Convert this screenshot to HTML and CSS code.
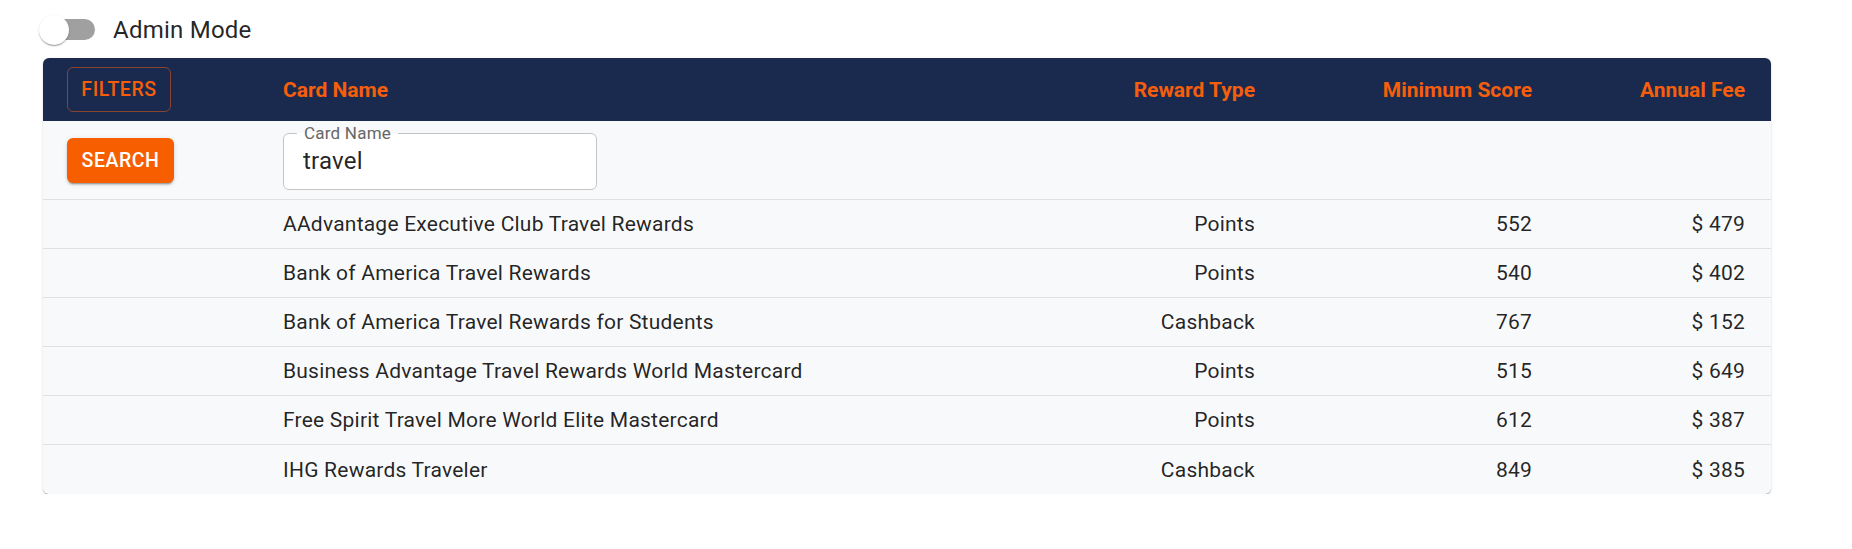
FILE: index.html
```html
<!DOCTYPE html>
<html>
<head>
<meta charset="utf-8">
<link rel="stylesheet" href="styles.css">
</head>
<body>
<div class="page">
  <div class="toggle-row">
    <span class="switch"><span class="track"></span><span class="thumb"></span></span>
    <span class="toggle-label">Admin Mode</span>
  </div>
  <div class="card">
    <div class="row head">
      <div class="cell"><button class="btn-outlined">Filters</button></div>
      <div class="cell">Card Name</div>
      <div class="cell right">Reward Type</div>
      <div class="cell right">Minimum Score</div>
      <div class="cell right">Annual Fee</div>
    </div>
    <div class="row filter">
      <div class="cell"><button class="btn-contained">Search</button></div>
      <div class="cell">
        <div class="field">
          <span class="field-label">Card Name</span>
          <span class="field-value">travel</span>
        </div>
      </div>
      <div class="cell"></div>
      <div class="cell"></div>
      <div class="cell"></div>
    </div>
    <div class="row body">
      <div class="cell"></div>
      <div class="cell">AAdvantage Executive Club Travel Rewards</div>
      <div class="cell right">Points</div>
      <div class="cell right">552</div>
      <div class="cell right">$ 479</div>
    </div>
    <div class="row body">
      <div class="cell"></div>
      <div class="cell">Bank of America Travel Rewards</div>
      <div class="cell right">Points</div>
      <div class="cell right">540</div>
      <div class="cell right">$ 402</div>
    </div>
    <div class="row body">
      <div class="cell"></div>
      <div class="cell">Bank of America Travel Rewards for Students</div>
      <div class="cell right">Cashback</div>
      <div class="cell right">767</div>
      <div class="cell right">$ 152</div>
    </div>
    <div class="row body">
      <div class="cell"></div>
      <div class="cell">Business Advantage Travel Rewards World Mastercard</div>
      <div class="cell right">Points</div>
      <div class="cell right">515</div>
      <div class="cell right">$ 649</div>
    </div>
    <div class="row body">
      <div class="cell"></div>
      <div class="cell">Free Spirit Travel More World Elite Mastercard</div>
      <div class="cell right">Points</div>
      <div class="cell right">612</div>
      <div class="cell right">$ 387</div>
    </div>
    <div class="row body last">
      <div class="cell"></div>
      <div class="cell">IHG Rewards Traveler</div>
      <div class="cell right">Cashback</div>
      <div class="cell right">849</div>
      <div class="cell right">$ 385</div>
    </div>
  </div>
</div>
</body>
</html>
```
FILE: styles.css
```css
* { box-sizing: border-box; }
html, body { margin: 0; padding: 0; background: #fff; }
body { font-family: Roboto, "Noto Sans", Arial, sans-serif; color: rgba(0,0,0,0.87); }

.page { padding: 1px 0 0 43px; width: 1771px; }

.toggle-row { height: 57px; display: flex; align-items: center; }
.switch { position: relative; width: 70px; height: 57px; display: inline-block; }
.track { position: absolute; left: 1px; top: 18px; width: 51px; height: 21px; border-radius: 11px; background: #a0a0a0; }
.thumb { position: absolute; left: -4px; top: 13.5px; width: 30px; height: 30px; border-radius: 50%; background: #fff;
  box-shadow: 0 2px 1px -1px rgba(0,0,0,0.2), 0 1px 1px 0 rgba(0,0,0,0.14), 0 1px 3px 0 rgba(0,0,0,0.12); }
.toggle-label { font-size: 24px; letter-spacing: 0.01em; margin-left: 0; }

.card { border-radius: 6px; overflow: hidden; background: #f8f9fb;
  box-shadow: 0 2px 1px -1px rgba(0,0,0,0.2), 0 1px 1px 0 rgba(0,0,0,0.14), 0 1px 3px 0 rgba(0,0,0,0.12); }

.row { display: grid; grid-template-columns: 216px 1fr 260px 277px 213px; align-items: center; border-bottom: 1px solid #e0e0e0; }
.row.last { border-bottom: none; }
.cell { padding: 0 24px; font-size: 21px; line-height: 30px; white-space: nowrap; letter-spacing: 0.01071em; }
.cell.right { text-align: right; padding-right: 26px; }

.head { height: 63px; background: #1a2a4e; border-bottom: none; }
.head .cell { color: #f65e0c; font-weight: 700; letter-spacing: 0; }

.filter { height: 79px; }
.body { height: 49px; }
.body .cell { color: rgba(0,0,0,0.87); }

button { font-family: inherit; cursor: pointer; }
.btn-outlined { height: 45px; width: 104px; background: transparent; border: 1px solid rgba(246,94,12,0.5); border-radius: 6px;
  color: #f65e0c; font-size: 19.5px; font-weight: 500; text-transform: uppercase; letter-spacing: 0.02857em; padding: 0; display: block; }
.btn-contained { height: 45px; width: 107px; background: #f65e00; border: none; border-radius: 6px; color: #fff;
  font-size: 19.5px; font-weight: 500; text-transform: uppercase; letter-spacing: 0.02857em; padding: 0; display: block;
  box-shadow: 0 3px 1px -2px rgba(0,0,0,0.2), 0 2px 2px 0 rgba(0,0,0,0.14), 0 1px 5px 0 rgba(0,0,0,0.12); }

.field { position: relative; width: 314px; height: 57px; margin-top: 2px; background: #fff; border: 1px solid #c4c4c4; border-radius: 6px;
  display: flex; align-items: center; padding-left: 19px; }
.field-label { position: absolute; left: 13px; top: -12px; padding: 0 7px; font-size: 17px; line-height: 22px; color: #666;
  background: linear-gradient(to bottom, #f8f9fb 50%, #fff 50%); }
.field-value { font-size: 24px; line-height: 30px; color: rgba(0,0,0,0.87); letter-spacing: 0.00938em; }
```
